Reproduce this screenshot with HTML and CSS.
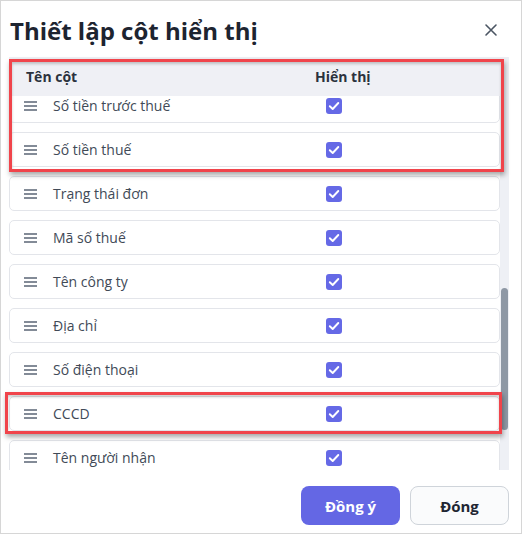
FILE: index.html
```html
<!DOCTYPE html>
<html lang="vi">
<head>
<meta charset="utf-8">
<title>Thiết lập cột hiển thị</title>
<link rel="stylesheet" href="styles.css">
</head>
<body>
<div class="dialog">
  <div class="dialog-head">
    <h1 class="title">Thiết lập cột hiển thị</h1>
    <button class="close" aria-label="Đóng">
      <svg width="14" height="14" viewBox="0 0 14 14"><path d="M2 2L12 12M12 2L2 12" stroke="#4b5563" stroke-width="1.6" stroke-linecap="round"/></svg>
    </button>
  </div>

  <div class="table">
    <div class="table-main">
      <div class="table-header">
        <span class="col-name">Tên cột</span>
        <span class="col-show">Hiển thị</span>
      </div>
      <div class="list-viewport">
        <div class="list">
          <div class="row"><span class="handle"><svg width="13" height="10" viewBox="0 0 13 10"><path d="M0 1H13M0 5H13M0 9H13" stroke="#5b6675" stroke-width="1.4"/></svg></span><span class="label">Số tiền trước thuế</span><span class="check"><svg width="16" height="16" viewBox="0 0 16 16"><rect width="16" height="16" rx="3" fill="#6569e6"/><path d="M3.8 8.2L6.7 11L12.3 5" fill="none" stroke="#fff" stroke-width="1.9" stroke-linecap="round" stroke-linejoin="round"/></svg></span></div>
          <div class="row"><span class="handle"><svg width="13" height="10" viewBox="0 0 13 10"><path d="M0 1H13M0 5H13M0 9H13" stroke="#5b6675" stroke-width="1.4"/></svg></span><span class="label">Số tiền thuế</span><span class="check"><svg width="16" height="16" viewBox="0 0 16 16"><rect width="16" height="16" rx="3" fill="#6569e6"/><path d="M3.8 8.2L6.7 11L12.3 5" fill="none" stroke="#fff" stroke-width="1.9" stroke-linecap="round" stroke-linejoin="round"/></svg></span></div>
          <div class="row"><span class="handle"><svg width="13" height="10" viewBox="0 0 13 10"><path d="M0 1H13M0 5H13M0 9H13" stroke="#5b6675" stroke-width="1.4"/></svg></span><span class="label">Trạng thái đơn</span><span class="check"><svg width="16" height="16" viewBox="0 0 16 16"><rect width="16" height="16" rx="3" fill="#6569e6"/><path d="M3.8 8.2L6.7 11L12.3 5" fill="none" stroke="#fff" stroke-width="1.9" stroke-linecap="round" stroke-linejoin="round"/></svg></span></div>
          <div class="row"><span class="handle"><svg width="13" height="10" viewBox="0 0 13 10"><path d="M0 1H13M0 5H13M0 9H13" stroke="#5b6675" stroke-width="1.4"/></svg></span><span class="label">Mã số thuế</span><span class="check"><svg width="16" height="16" viewBox="0 0 16 16"><rect width="16" height="16" rx="3" fill="#6569e6"/><path d="M3.8 8.2L6.7 11L12.3 5" fill="none" stroke="#fff" stroke-width="1.9" stroke-linecap="round" stroke-linejoin="round"/></svg></span></div>
          <div class="row"><span class="handle"><svg width="13" height="10" viewBox="0 0 13 10"><path d="M0 1H13M0 5H13M0 9H13" stroke="#5b6675" stroke-width="1.4"/></svg></span><span class="label">Tên công ty</span><span class="check"><svg width="16" height="16" viewBox="0 0 16 16"><rect width="16" height="16" rx="3" fill="#6569e6"/><path d="M3.8 8.2L6.7 11L12.3 5" fill="none" stroke="#fff" stroke-width="1.9" stroke-linecap="round" stroke-linejoin="round"/></svg></span></div>
          <div class="row"><span class="handle"><svg width="13" height="10" viewBox="0 0 13 10"><path d="M0 1H13M0 5H13M0 9H13" stroke="#5b6675" stroke-width="1.4"/></svg></span><span class="label">Địa chỉ</span><span class="check"><svg width="16" height="16" viewBox="0 0 16 16"><rect width="16" height="16" rx="3" fill="#6569e6"/><path d="M3.8 8.2L6.7 11L12.3 5" fill="none" stroke="#fff" stroke-width="1.9" stroke-linecap="round" stroke-linejoin="round"/></svg></span></div>
          <div class="row"><span class="handle"><svg width="13" height="10" viewBox="0 0 13 10"><path d="M0 1H13M0 5H13M0 9H13" stroke="#5b6675" stroke-width="1.4"/></svg></span><span class="label">Số điện thoại</span><span class="check"><svg width="16" height="16" viewBox="0 0 16 16"><rect width="16" height="16" rx="3" fill="#6569e6"/><path d="M3.8 8.2L6.7 11L12.3 5" fill="none" stroke="#fff" stroke-width="1.9" stroke-linecap="round" stroke-linejoin="round"/></svg></span></div>
          <div class="row"><span class="handle"><svg width="13" height="10" viewBox="0 0 13 10"><path d="M0 1H13M0 5H13M0 9H13" stroke="#5b6675" stroke-width="1.4"/></svg></span><span class="label">CCCD</span><span class="check"><svg width="16" height="16" viewBox="0 0 16 16"><rect width="16" height="16" rx="3" fill="#6569e6"/><path d="M3.8 8.2L6.7 11L12.3 5" fill="none" stroke="#fff" stroke-width="1.9" stroke-linecap="round" stroke-linejoin="round"/></svg></span></div>
          <div class="row"><span class="handle"><svg width="13" height="10" viewBox="0 0 13 10"><path d="M0 1H13M0 5H13M0 9H13" stroke="#5b6675" stroke-width="1.4"/></svg></span><span class="label">Tên người nhận</span><span class="check"><svg width="16" height="16" viewBox="0 0 16 16"><rect width="16" height="16" rx="3" fill="#6569e6"/><path d="M3.8 8.2L6.7 11L12.3 5" fill="none" stroke="#fff" stroke-width="1.9" stroke-linecap="round" stroke-linejoin="round"/></svg></span></div>
        </div>
      </div>
    </div>
    <div class="scrollbar"><div class="thumb"></div></div>
  </div>

  <div class="footer">
    <button class="btn btn-primary">Đồng ý</button>
    <button class="btn btn-secondary">Đóng</button>
  </div>

  <div class="mark mark-top"></div>
  <div class="mark mark-cccd"></div>
</div>
</body>
</html>
```

FILE: styles.css
```css
* { box-sizing: border-box; }
html, body { margin: 0; padding: 0; background: #fff; }
body { font-family: "Open Sans", "Noto Sans", sans-serif; }

.dialog {
  position: relative;
  width: 522px;
  height: 534px;
  border: 1px solid #d6d6d6;
  background: #fff;
  display: flex;
  flex-direction: column;
}

.dialog-head {
  height: 56px;
  display: flex;
  align-items: flex-start;
  justify-content: space-between;
  padding: 13px 20px 0 9px;
}
.title {
  margin: 0;
  font-size: 24px;
  line-height: 34px;
  font-weight: 700;
  color: #1d2430;
  letter-spacing: 0;
}
.close {
  margin-top: 6px;
  width: 20px;
  height: 20px;
  padding: 0;
  border: 0;
  background: transparent;
  display: flex;
  align-items: center;
  justify-content: center;
}

.table {
  margin-left: 8px;
  width: 500px;
  height: 413px;
  display: grid;
  grid-template-columns: 491px 9px;
}
.table-main {
  display: flex;
  flex-direction: column;
  min-height: 0;
}
.table-header {
  height: 39px;
  flex: none;
  background: #eff0f5;
  display: grid;
  grid-template-columns: 289px 1fr;
  align-items: center;
  font-size: 14px;
  font-weight: 700;
  color: #2b323d;
  padding-left: 17px;
}
.list-viewport {
  flex: 1;
  overflow: hidden;
  min-height: 0;
}
.list {
  margin-top: -8px;
  display: flex;
  flex-direction: column;
  gap: 9px;
}
.row {
  height: 35px;
  border: 1px solid #e3e5ea;
  border-radius: 5px;
  background: #fff;
  display: grid;
  grid-template-columns: 29px 273px 16px;
  align-items: center;
  padding-left: 14px;
}
.handle { display: flex; align-items: center; }
.handle svg { display: block; }
.label {
  font-size: 14px;
  color: #414a57;
  white-space: nowrap;
}
.check { display: flex; }
.check svg { display: block; }

.scrollbar {
  background: #eef0f5;
  padding-top: 231px;
  padding-left: 1px;
}
.thumb {
  width: 7px;
  height: 142px;
  border-radius: 4px;
  background: #8e98a5;
}

.footer {
  flex: 1;
  display: flex;
  justify-content: flex-end;
  align-items: flex-start;
  gap: 10px;
  padding: 16px 12px 0 0;
}
.btn {
  height: 39px;
  width: 99px;
  border-radius: 8px;
  font-family: inherit;
  font-size: 15px;
  font-weight: 700;
  cursor: pointer;
}
.btn-primary {
  background: #6467e4;
  color: #fff;
  border: 0;
}
.btn-secondary {
  background: #fafbfc;
  color: #1f2633;
  border: 1px solid #cfd4da;
}

.mark {
  position: absolute;
  border: 3px solid #f0444b;
  box-shadow: 1px 3px 5px rgba(0, 0, 0, 0.35), inset 0 2px 3px rgba(0, 0, 0, 0.2);
  pointer-events: none;
}
.mark-top {
  left: 8px;
  top: 58px;
  width: 495px;
  height: 113px;
}
.mark-cccd {
  left: 4px;
  top: 391px;
  width: 497px;
  height: 42px;
}
```
